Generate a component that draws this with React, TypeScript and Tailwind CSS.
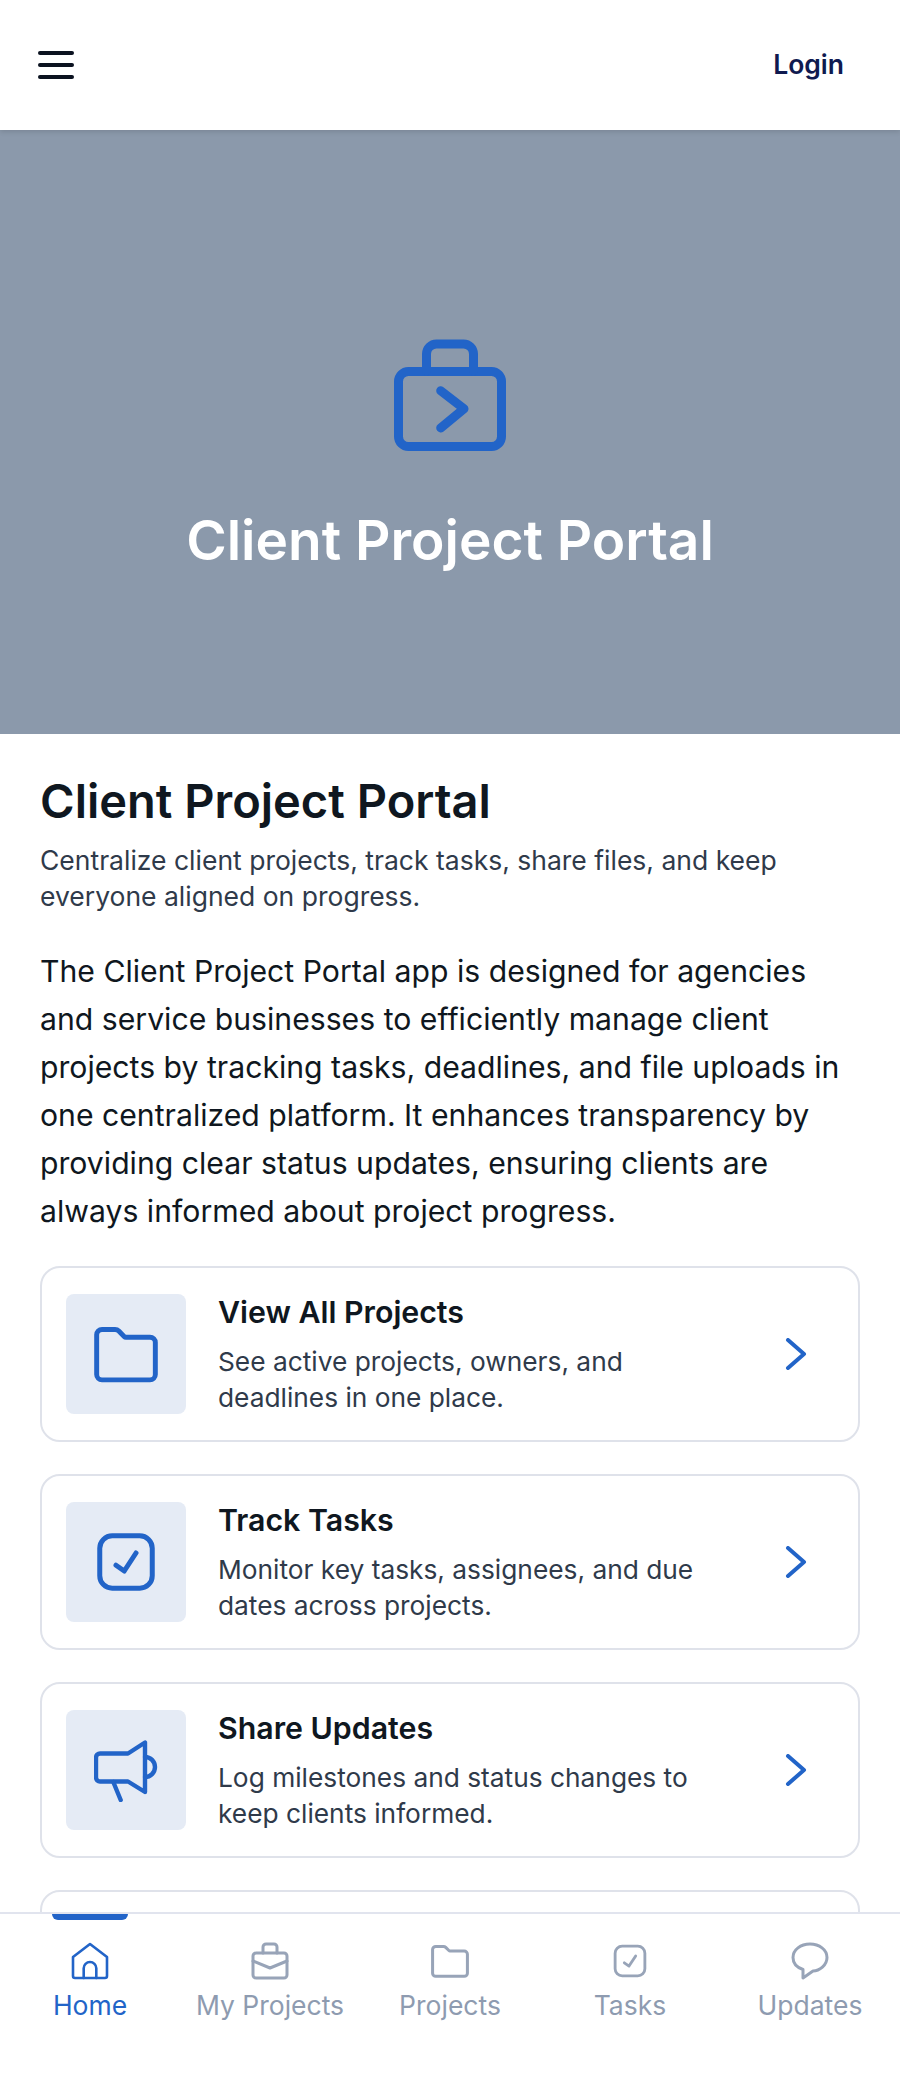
import { ReactNode } from "react";

const blue = "#2264c8";

function FolderIcon({ size, color, width }: { size: number; color: string; width: number }) {
  return (
    <svg width={size} height={size} viewBox="0 0 24 24" fill="none" stroke={color} strokeWidth={width} strokeLinejoin="round" strokeLinecap="round">
      <path d="M1 4.800a2 2 0 0 1 2-2h4.900a2 2 0 0 1 1.400.6l2 2a1 1 0 0 0 .7.3H21a2 2 0 0 1 2 2v12a2 2 0 0 1-2 2H3a2 2 0 0 1-2-2z" />
    </svg>
  );
}

function CheckIcon({ size, color, width }: { size: number; color: string; width: number }) {
  return (
    <svg width={size} height={size} viewBox="0 0 24 24" fill="none" stroke={color} strokeWidth={width} strokeLinejoin="round" strokeLinecap="round">
      <rect x="1.500" y="1.500" width="21" height="21" rx="5" />
      <path d="M8 13.300l3.300 2.300L16 8.400" />
    </svg>
  );
}

function MegaphoneIcon() {
  return (
    <svg width={64} height={64} viewBox="0 0 64 64" fill="none" stroke={blue} strokeWidth={4.4} strokeLinejoin="round" strokeLinecap="round">
      <path d="M6 15.500h28L51 4.500V54L34 43.500H6a4 4 0 0 1-4-4v-20a4 4 0 0 1 4-4z" />
      <path d="M51 19a10 10 0 0 1 0 20" />
      <path d="M19.300 44l7.400 18" />
    </svg>
  );
}

function Chevron() {
  return (
    <svg width={24} height={32} viewBox="0 0 24 32" fill="none" stroke={blue} strokeWidth={4} strokeLinejoin="round" strokeLinecap="round">
      <path d="M4 2l16 14L4 30" />
    </svg>
  );
}

function Card({ icon, title, desc }: { icon: ReactNode; title: string; desc: string[] }) {
  return (
    <div className="flex items-center h-[176px] rounded-[20px] border-2 border-[#dfe2ea] bg-white pl-[24px] pr-[50px]">
      <div className="flex h-[120px] w-[120px] shrink-0 items-center justify-center rounded-[8px] bg-[#e5ebf5]">{icon}</div>
      <div className="ml-[32px] flex-1">
        <div className="text-[30.300px] leading-[40px] font-semibold text-[#0f1720]">{title}</div>
        <div className="mt-[12px] text-[26.300px] leading-[36px] text-[#2f3a4a]">
          {desc.map((d) => (
            <div key={d}>{d}</div>
          ))}
        </div>
      </div>
      <Chevron />
    </div>
  );
}

function NavItem({ icon, label, active }: { icon: ReactNode; label: string; active?: boolean }) {
  return (
    <div className="relative flex w-[180px] flex-col items-center pt-[27px]">
      {active && <div className="absolute left-[52px] top-0 h-[6px] w-[76px] rounded-b-[6px] bg-[#2264c8]" />}
      <div className="flex h-[40px] items-center justify-center">{icon}</div>
      <div className={`mt-[6px] text-[26.500px] leading-[36px] ${active ? "text-[#2264c8]" : "text-[#8e9bb0]"}`}>{label}</div>
    </div>
  );
}

export default function App() {
  return (
    <div className="flex h-[2090px] w-[900px] flex-col overflow-hidden bg-white font-['Inter',sans-serif]">
      <main className="h-[1912px] shrink-0 overflow-hidden">
        <header className="relative z-10 flex h-[130px] items-center justify-between bg-white pl-[38px] pr-[56px] shadow-[0_2px_5px_rgba(0,0,0,0.12)]">
          <div className="flex flex-col gap-[8px]">
            <div className="h-[4px] w-[36px] rounded-full bg-[#0b1220]" />
            <div className="h-[4px] w-[36px] rounded-full bg-[#0b1220]" />
            <div className="h-[4px] w-[36px] rounded-full bg-[#0b1220]" />
          </div>
          <div className="text-[26.500px] font-semibold text-[#0f1a50]">Login</div>
        </header>

        <section className="flex h-[604px] flex-col items-center bg-[#8b99ab] pt-[209px]">
          <svg width={112} height={112} viewBox="0 0 112 112" fill="none" stroke={blue} strokeWidth={9} strokeLinejoin="round" strokeLinecap="round">
            <rect x="4.500" y="32.500" width="103" height="75" rx="10" />
            <path d="M32.500 32V15a10 10 0 0 1 10-10h27a10 10 0 0 1 10 10v17" />
            <path d="M46.700 51.700L70 69.700 46.700 89" />
          </svg>
          <h2 className="mt-[53px] text-[55px] leading-[72px] font-semibold text-white">Client Project Portal</h2>
        </section>

        <div className="px-[40px] pt-[39px]">
          <h1 className="text-[47px] leading-[56px] font-semibold text-[#0f1720]">Client Project Portal</h1>
          <p className="mt-[13px] text-[26.500px] leading-[36px] text-[#2f3a4a]">
            Centralize client projects, track tasks, share files, and keep<br />everyone aligned on progress.
          </p>
          <p className="mt-[33px] text-[30.200px] leading-[48px] text-[#0f1720]">
            The Client Project Portal app is designed for agencies<br />
            and service businesses to efficiently manage client<br />
            projects by tracking tasks, deadlines, and file uploads in<br />
            one centralized platform. It enhances transparency by<br />
            providing clear status updates, ensuring clients are<br />
            always informed about project progress.
          </p>

          <div className="mt-[31px] flex flex-col gap-[32px]">
            <Card icon={<FolderIcon size={64} color={blue} width={1.85} />} title="View All Projects" desc={["See active projects, owners, and", "deadlines in one place."]} />
            <Card icon={<CheckIcon size={60} color={blue} width={2} />} title="Track Tasks" desc={["Monitor key tasks, assignees, and due", "dates across projects."]} />
            <Card icon={<MegaphoneIcon />} title="Share Updates" desc={["Log milestones and status changes to", "keep clients informed."]} />
            <div className="h-[176px] rounded-[20px] border-2 border-[#dfe2ea] bg-white" />
          </div>
        </div>
      </main>

      <nav className="flex flex-1 border-t-2 border-[#e1e4ee] bg-white">
        <NavItem
          active
          label="Home"
          icon={
            <svg width={38} height={38} viewBox="0 0 38 38" fill="none" stroke={blue} strokeWidth={2.6} strokeLinejoin="round" strokeLinecap="round">
              <path d="M2 15L19 2l17 13v19a2 2 0 0 1-2 2H4a2 2 0 0 1-2-2z" />
              <path d="M12.700 36v-9.700a6.300 6.300 0 0 1 12.600 0V36" />
            </svg>
          }
        />
        <NavItem
          label="My Projects"
          icon={
            <svg width={38} height={38} viewBox="0 0 38 38" fill="none" stroke="#98a4b8" strokeWidth={3} strokeLinejoin="round" strokeLinecap="round">
              <rect x="2" y="11" width="34" height="25" rx="3" />
              <path d="M12 11V5a3 3 0 0 1 3-3h8a3 3 0 0 1 3 3v6" />
              <path d="M2 19l17 7 17-7" />
            </svg>
          }
        />
        <NavItem label="Projects" icon={<FolderIcon size={38} color="#98a4b8" width={1.9} />} />
        <NavItem label="Tasks" icon={<CheckIcon size={34} color="#98a4b8" width={2} />} />
        <NavItem
          label="Updates"
          icon={
            <svg width={38} height={38} viewBox="0 0 38 38" fill="none" stroke="#98a4b8" strokeWidth={3} strokeLinejoin="round" strokeLinecap="round">
              <path d="M19 2c9.400 0 17 5.800 17 13.500S28.400 29 22 29l-10 7v-8.500C6 25.500 2 21 2 15.500 2 7.800 9.600 2 19 2z" />
            </svg>
          }
        />
      </nav>
    </div>
  );
}
